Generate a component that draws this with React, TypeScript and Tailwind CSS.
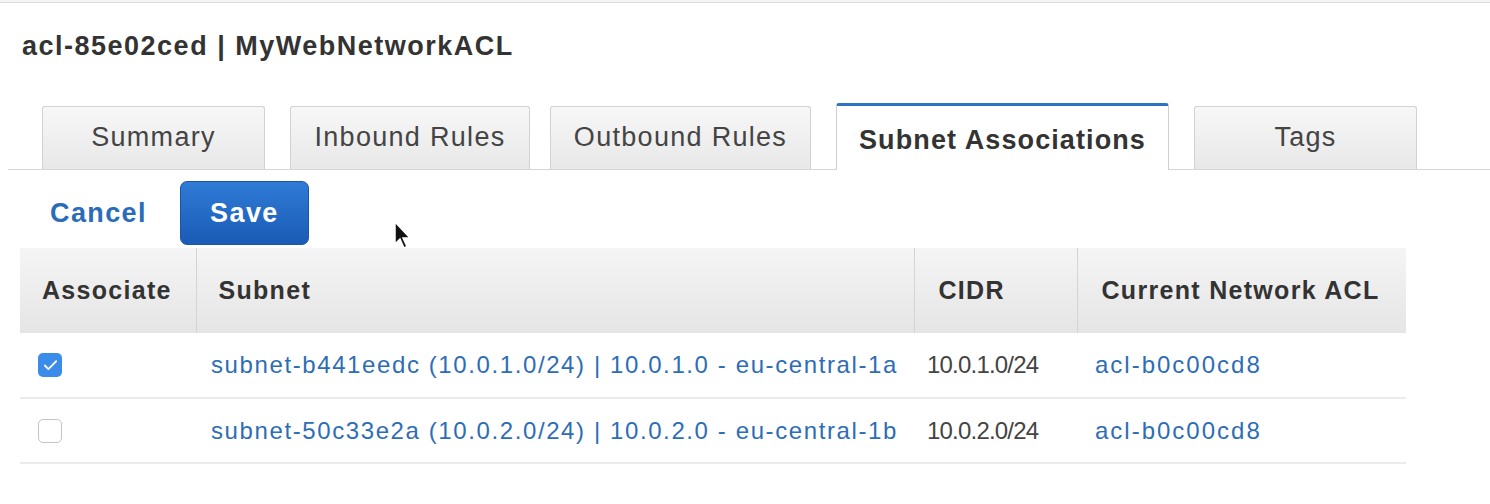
import { Check } from "lucide-react";

const tabs = [
  { label: "Summary", cls: "ml-[34px] w-[223px]" },
  { label: "Inbound Rules", cls: "ml-[25px] w-[240px]" },
  { label: "Outbound Rules", cls: "ml-[20px] w-[261px]" },
  { label: "Subnet Associations", cls: "ml-[25px] w-[333px]", active: true },
  { label: "Tags", cls: "ml-[25px] w-[223px]" },
];

const rows = [
  {
    checked: true,
    subnet: "subnet-b441eedc (10.0.1.0/24) | 10.0.1.0 - eu-central-1a",
    cidr: "10.0.1.0/24",
    acl: "acl-b0c00cd8",
  },
  {
    checked: false,
    subnet: "subnet-50c33e2a (10.0.2.0/24) | 10.0.2.0 - eu-central-1b",
    cidr: "10.0.2.0/24",
    acl: "acl-b0c00cd8",
  },
];

function Cursor() {
  return (
    <svg className="absolute left-[393px] top-[220px]" width="18" height="30" viewBox="0 0 18 30">
      <path d="M2 2 L2 24 L7 19 L11 28 L14 26.5 L10 18 L17 18 Z" fill="#111" stroke="#fff" strokeWidth="1.5" />
    </svg>
  );
}

export default function App() {
  return (
    <div className="relative h-[504px] w-[1490px] overflow-hidden bg-white font-['Liberation_Sans',Arial,sans-serif] text-[#333]">
      <div className="h-[3px] border-b border-[#dcdcdc] bg-[#f4f4f4]" />

      <h1 className="mt-[28px] pl-[22px] text-[27px] font-bold leading-[30px] tracking-[1.5px] text-[#333]">
        acl-85e02ced | MyWebNetworkACL
      </h1>

      <div className="mt-[43px] ml-[8px] flex h-[66px] items-end border-b border-[#d6d6d6]">
        {tabs.map((t) =>
          t.active ? (
            <div
              key={t.label}
              className={`${t.cls} -mb-px flex h-[67px] items-center justify-center rounded-t-[3px] border border-b-0 border-[#d0d0d0] border-t-[3px] border-t-[#2e74c4] bg-white pt-[4px] text-[27px] font-bold tracking-[1.1px] text-[#333]`}
            >
              {t.label}
            </div>
          ) : (
            <div
              key={t.label}
              className={`${t.cls} flex h-[63px] items-center justify-center rounded-t-[3px] border border-b-0 border-[#d2d2d2] bg-gradient-to-b from-[#f7f7f7] to-[#e8e8e8] pb-[2px] text-[27px] tracking-[1.3px] text-[#444]`}
            >
              {t.label}
            </div>
          )
        )}
      </div>

      <div className="mt-[11px] flex h-[64px] items-center pl-[50px]">
        <span className="text-[27px] font-bold tracking-[1.4px] text-[#2b6cb8]">Cancel</span>
        <button
          type="button"
          className="ml-[33px] h-[64px] w-[129px] rounded-[7px] border border-[#1c55a8] bg-gradient-to-b from-[#2f7bd6] to-[#1a5bb5] text-[27px] font-bold tracking-[1.4px] text-white"
        >
          Save
        </button>
      </div>

      <table className="ml-[20px] mt-[3px] w-[1386px] border-collapse">
        <thead>
          <tr className="h-[85px] bg-gradient-to-b from-[#f5f5f5] to-[#e5e5e5] text-left text-[25px] tracking-[1.3px] text-[#333]">
            <th className="w-[176px] border-r border-[#d4d4d4] pl-[22px] font-bold">Associate</th>
            <th className="w-[718px] border-r border-[#d4d4d4] pl-[22px] font-bold">Subnet</th>
            <th className="w-[163px] border-r border-[#d4d4d4] pl-[24px] font-bold">CIDR</th>
            <th className="pl-[24px] font-bold">Current Network ACL</th>
          </tr>
        </thead>
        <tbody>
          {rows.map((r) => (
            <tr key={r.subnet} className="h-[65px] border-b-2 border-[#ebebeb] text-[24px]">
              <td className="pl-[18px]">
                {r.checked ? (
                  <span className="flex h-[24px] w-[24px] items-center justify-center rounded-[5px] bg-[#3b8beb]">
                    <Check className="h-[17px] w-[17px] text-white" strokeWidth={2.5} />
                  </span>
                ) : (
                  <span className="block h-[24px] w-[24px] rounded-[5px] border border-[#c4c4c4] bg-white" />
                )}
              </td>
              <td className="pl-[15px] tracking-[1.6px] text-[#2d6db5]">{r.subnet}</td>
              <td className="pl-[13px] tracking-[-0.8px] text-[#444]">{r.cidr}</td>
              <td className="pl-[18px] tracking-[2px] text-[#2d6db5]">{r.acl}</td>
            </tr>
          ))}
        </tbody>
      </table>

      <Cursor />
    </div>
  );
}
